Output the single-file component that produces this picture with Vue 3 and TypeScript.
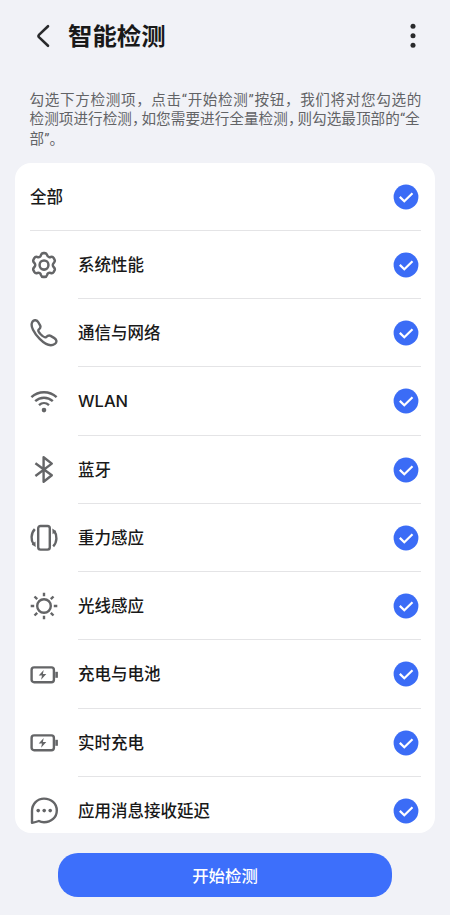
<script setup lang="ts">
import { ref } from 'vue'

interface CheckItem {
  icon: string
  label: string
  checked: boolean
}

const allChecked = ref<boolean>(true)
const items = ref<CheckItem[]>([
  { icon: 'gear', label: '系统性能', checked: true },
  { icon: 'phone', label: '通信与网络', checked: true },
  { icon: 'wifi', label: 'WLAN', checked: true },
  { icon: 'bluetooth', label: '蓝牙', checked: true },
  { icon: 'gravity', label: '重力感应', checked: true },
  { icon: 'light', label: '光线感应', checked: true },
  { icon: 'battery', label: '充电与电池', checked: true },
  { icon: 'battery', label: '实时充电', checked: true },
  { icon: 'message', label: '应用消息接收延迟', checked: true },
])

function toggleAll(): void {
  allChecked.value = !allChecked.value
  items.value.forEach((item) => (item.checked = allChecked.value))
}

function toggle(item: CheckItem): void {
  item.checked = !item.checked
  allChecked.value = items.value.every((entry) => entry.checked)
}
</script>

<template>
  <div class="page">
    <header class="header">
      <svg class="back" viewBox="0 0 16 26">
        <path d="M13 3.2 4.2 11.6q-1.4 1.4 0 2.8L13 22.8" />
      </svg>
      <h1 class="title">智能检测</h1>
      <svg class="more" viewBox="0 0 8 26">
        <circle cx="4" cy="3.2" r="2.5" />
        <circle cx="4" cy="12.8" r="2.5" />
        <circle cx="4" cy="22.2" r="2.5" />
      </svg>
    </header>

    <p class="intro">
      <span class="line wide">勾选下方检测项，点击“开始检测”按钮，我们将对您勾选的</span>
      <span class="line tight">检测项进行检测<i class="comma">，</i>如您需要进行全量检测<i class="comma">，</i>则勾选最顶部的“全</span>
      <span class="line tight">部”。</span>
    </p>

    <main class="card">
      <div class="row all" @click="toggleAll">
        <div class="body">
          <span class="label">全部</span>
          <svg class="check" :class="{ off: !allChecked }" viewBox="0 0 26 26">
            <circle cx="13" cy="13" r="12.4" />
            <path d="m6.8 12.9 4.5 4.4 8.2-8" />
          </svg>
        </div>
      </div>
      <div v-for="item in items" :key="item.label" class="row" @click="toggle(item)">
        <svg class="icon" viewBox="0 0 28 28">
          <g v-if="item.icon === 'gear'" transform="translate(-.4 .1) scale(1.03 1.07)">
            <path d="M11.1 3.6Q11.6 1.9 13.2 1.9h1.6q1.6 0 2.1 1.7.5 1.8 2.2 2.1.7.1 1.4-.2 1.9-.6 2.8.8l.9 1.6q.8 1.5-.5 2.8-2.4 2.3 0 4.6 1.3 1.3.5 2.8l-.9 1.6q-.9 1.4-2.8.8-2.9-.8-3.6 1.9-.5 1.7-2.1 1.7h-1.6q-1.6 0-2.1-1.7-.7-2.7-3.6-1.9-1.9.6-2.8-.8l-.9-1.6q-.8-1.5.5-2.8 2.4-2.3 0-4.6-1.3-1.3-.5-2.8l.9-1.6q.9-1.4 2.8-.8 2.9.8 3.6-1.9Z" />
            <circle cx="14" cy="13" r="4.3" />
          </g>
          <path v-else-if="item.icon === 'phone'" d="M2.4 2.8C4.2.4 7 .8 8.3 3.2l1.8 3.2c1.1 2-.1 3.1-1.4 4.2-1.1 1 .4 3 2.2 4.9 2.1 2 4 3.6 5.2 2.6 1.4-1.3 2.5-2.3 4.5-1.2l3.8 2.2c2.5 1.5 2.7 4.2.5 5.8-3.7 2.7-9.5.7-15.2-5C4.2 14.5-.2 6.8 2.4 2.8Z" />
          <g v-else-if="item.icon === 'wifi'">
            <path d="M1.4 9.2c7.2-6.6 18-6.6 25.2 0M5.2 13.2c5.1-4.7 12.5-4.7 17.6 0M9 17.1c3-2.7 7-2.7 10 0" />
            <circle class="solid" cx="14" cy="22.1" r="2.3" />
          </g>
          <path v-else-if="item.icon === 'bluetooth'" d="m5.4 7.2 16.4 12-8.2 6.6V1.2l8.2 6.4-16.4 12.4" />
          <g v-else-if="item.icon === 'gravity'">
            <rect x="8.2" y="2" width="11.6" height="23.6" rx="2.3" />
            <path d="M4.8 5.2c-4 4.2-4.2 11.2-1 15.4M23.2 22.4c4-4.2 4.2-11.2 1-15.4" />
            <path class="solid" d="m5.4 17.4.3 5.6-4-2.6ZM22.6 10.2l-.3-5.6 4 2.6Z" />
          </g>
          <g v-else-if="item.icon === 'light'">
            <circle cx="14" cy="14" r="6.8" />
            <path d="M14 .7v3.5M14 23.8v3.5M.7 14h3.5M23.8 14h3.5M4.5 4.5l2.7 2.7M20.8 20.8l2.7 2.7M4.5 23.5l2.7-2.7M20.8 7.2l2.7-2.7" />
          </g>
          <g v-else-if="item.icon === 'battery'">
            <rect x="1.6" y="6.4" width="22.3" height="14.8" rx="2.5" />
            <path class="bar" d="M26.6 10.8v6" />
            <path class="solid" d="M13.7 9 8.7 14.6h3.3l-.9 4.2 5.2-5.8h-3.4Z" />
          </g>
          <g v-else>
            <path d="M2 25.9V14.1C2 6.6 7.4 1.6 14 1.6c7.2 0 12.8 5 12.8 11.8S21.2 25.2 14 25.2c-2 0-3.7-.4-5.1-1.2Q5.8 25.2 2 25.9Z" />
            <circle class="solid" cx="8.2" cy="13.6" r="1.8" />
            <circle class="solid" cx="14.2" cy="13.6" r="1.8" />
            <circle class="solid" cx="20.2" cy="13.6" r="1.8" />
          </g>
        </svg>
        <div class="body">
          <span class="label">{{ item.label }}</span>
          <svg class="check" :class="{ off: !item.checked }" viewBox="0 0 26 26">
            <circle cx="13" cy="13" r="12.4" />
            <path d="m6.8 12.9 4.5 4.4 8.2-8" />
          </svg>
        </div>
      </div>
    </main>

    <button class="start" type="button">开始检测</button>
  </div>
</template>

<style>
body {
  background: #f1f2f7;
}
</style>

<style scoped>
.page {
  box-sizing: border-box;
  height: 915px;
  padding: 0 15px;
  overflow: hidden;
  background: #f1f2f7;
  color: #191919;
  font-family: Inter, "Noto Sans CJK SC", sans-serif;
}
.header {
  display: flex;
  align-items: center;
  height: 71px;
  padding: 0 18px 0 20px;
}
.back {
  width: 16px;
  height: 26px;
  fill: none;
  stroke: #292a2c;
  stroke-width: 2.6;
  stroke-linecap: round;
}
.title {
  flex: 1;
  margin: 0 0 0 17px;
  font-size: 24.4px;
  line-height: 36px;
  font-weight: 700;
}
.more {
  width: 8px;
  height: 26px;
  fill: #292a2c;
}
.intro {
  box-sizing: border-box;
  height: 91.5px;
  margin: 0;
  padding: 19.6px 14px 0 14.5px;
  color: #626366;
  font-family: Roboto, "Noto Sans CJK SC", sans-serif;
}
.line {
  display: block;
  font-size: 14.6px;
  line-height: 19.6px;
  height: 19.6px;
  white-space: nowrap;
}
.wide {
  letter-spacing: 0.64px;
}
.tight {
  letter-spacing: 0.05px;
}
.comma {
  margin-right: 2.1px;
  font-style: normal;
  font-feature-settings: "halt";
}
.card {
  box-sizing: border-box;
  height: 670.5px;
  overflow: hidden;
  border-radius: 16px;
  background: #fff;
}
.row {
  display: flex;
  align-items: center;
  height: 68.25px;
  padding: 0 14px 0 15px;
}
.icon {
  flex: none;
  width: 28px;
  height: 28px;
  margin: 0.4px 20px 0 0;
  fill: none;
  stroke: #646567;
  stroke-width: 2.4;
  stroke-linejoin: round;
}
.icon .solid {
  fill: #646567;
  stroke: none;
}
.icon .bar {
  stroke-width: 2.6;
}
.body {
  box-sizing: border-box;
  display: flex;
  flex: 1;
  align-items: center;
  justify-content: space-between;
  height: 100%;
  padding: 1px 2px 0 0;
  border-bottom: 1px solid #e4e4e6;
}
.row:last-child .body {
  padding-bottom: 1px;
  border-bottom: 0;
}
.label {
  font-size: 16.5px;
  line-height: 24px;
  font-weight: 500;
}
.check {
  width: 26px;
  height: 26px;
}
.check circle {
  fill: #3b6cf6;
}
.check path {
  fill: none;
  stroke: #fff;
  stroke-width: 2.2;
}
.check.off circle {
  fill: #d4d6db;
}
.start {
  display: block;
  width: 334px;
  height: 44px;
  margin: 19.5px auto 0;
  padding: 0;
  border: 0;
  border-radius: 20px;
  background: #3d6ffb;
  color: #fff;
  font-family: inherit;
  font-size: 16.4px;
  font-weight: 500;
}
</style>
